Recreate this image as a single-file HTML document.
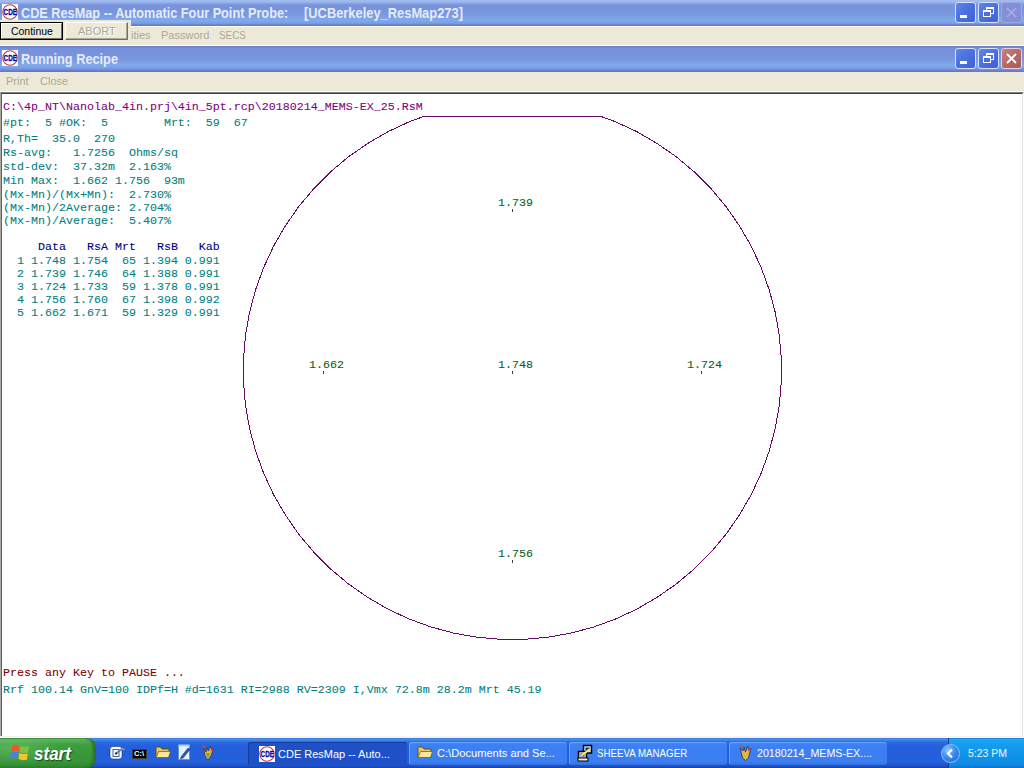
<!DOCTYPE html>
<html><head><meta charset="utf-8">
<style>
*{margin:0;padding:0;box-sizing:border-box}
html,body{width:1024px;height:768px;overflow:hidden;background:#fff;position:relative;font-family:"Liberation Sans",sans-serif}
.abs{position:absolute}
.tb{position:absolute;left:0;width:1024px;height:26px;
 background:linear-gradient(to bottom,#a4bef2 0px,#9cb8f0 2px,#88a4e4 3.5px,#7894da 5px,#7893dc 9px,#7a97df 14px,#7c9fe3 17px,#7eaae8 20px,#7aa6e8 22px,#7c92e0 24px,#6878c8 25px,#6878c8 26px)}
.ttl{position:absolute;left:21px;top:4px;color:#e4ecfc;font-weight:bold;font-size:14px;white-space:pre;transform:scaleX(0.908);transform-origin:0 0}
.menu{position:absolute;left:0;width:1024px;background:#ece9d8}
.mt{position:absolute;font-size:11px;color:#aca899;white-space:pre}
.mono{position:absolute;font-family:"Liberation Mono",monospace;font-size:11.67px;white-space:pre;line-height:14px;-webkit-text-stroke:0.08px currentColor}
.teal{color:#008080}.purp{color:#800080}.navy{color:#000080}.dred{color:#800000}.grn{color:#0b5d1e}
.tick{position:absolute;width:1px;height:3px;background:#2c4a30}
.xbtn{position:absolute;width:21px;height:21px;border:1px solid #d8e2fa;border-radius:3px;
 background:linear-gradient(135deg,#5f85ea 0%,#4a6fe0 50%,#3d62db 100%)}
.tbtn{position:absolute;top:742px;height:23px;border-radius:3px;color:#fff;font-size:11px;white-space:pre;line-height:23px}
</style></head><body>
<!-- main title bar -->
<div class="tb" style="top:0"></div>
<svg class="abs" style="left:2px;top:4px" width="16" height="16"><rect x="0" y="0" width="16" height="16" fill="#fff"/><circle cx="8" cy="8" r="7.2" fill="none" stroke="#c03a3a" stroke-width="1.1"/><text x="1.6" y="11.3" font-family="Liberation Sans" font-weight="bold" font-size="8.6" fill="#0a0aa8" stroke="#0a0aa8" stroke-width="0.3" textLength="13.4" lengthAdjust="spacingAndGlyphs">CDE</text></svg><div class="xbtn" style="left:955px;top:2px"><div class="abs" style="left:4px;top:12px;width:7px;height:3px;background:#fff"></div></div>
<div class="xbtn" style="left:978px;top:2px"><div class="abs" style="left:7px;top:4px;width:8px;height:7px;border:1px solid #fff;border-top-width:2px"></div><div class="abs" style="left:4px;top:7px;width:8px;height:7px;border:1px solid #fff;border-top-width:2px;background:#4a6fe0"></div></div><div class="xbtn" style="left:1001px;top:2px;background:#8490d6;border-color:#9aa8e6"><svg class="abs" style="left:0;top:0" width="19" height="19"><path d="M5 5 L14 14 M14 5 L5 14" stroke="#b4b0e4" stroke-width="1.2"/></svg></div>
<div class="ttl" style="top:5px">CDE ResMap -- Automatic Four Point Probe:</div><div class="ttl" style="top:5px;left:304px;transform:scaleX(0.92)">[UCBerkeley_ResMap273]</div>
<!-- main menu -->
<div class="menu" style="top:26px;height:20px;border-top:1px solid #fff;border-bottom:1px solid #fff"></div>
<div class="mt" style="left:131px;top:29px">ities</div>
<div class="mt" style="left:161px;top:29px">Password</div>
<div class="mt" style="left:219px;top:29px;transform:scaleX(0.9);transform-origin:0 0">SECS</div>
<!-- button panel -->
<div class="abs" style="left:0;top:20px;width:131px;height:25px;background:#ece9d8"></div>
<div class="abs" style="left:0;top:22px;width:63px;height:18px;border:1px solid #000;background:#ece9d8">
 <div class="abs" style="left:0;top:0;right:0;bottom:0;border-top:1px solid #fff;border-left:1px solid #fff;border-right:1px solid #716f64;border-bottom:1px solid #716f64"></div>
 <div class="abs" style="left:10px;top:2px;font-size:11px;color:#000;transform:scaleX(0.95);transform-origin:0 0">Continue</div>
</div>
<div class="abs" style="left:65px;top:22px;width:63px;height:18px;background:#ece9d8;border-top:1px solid #fff;border-left:1px solid #fff;border-right:1px solid #716f64;border-bottom:1px solid #716f64">
 <div class="abs" style="left:0;top:0;right:0;bottom:0;border-right:1px solid #aca899;border-bottom:1px solid #aca899"></div>
 <div class="abs" style="left:12px;top:2px;font-size:11px;color:#aca899;text-shadow:1px 1px 0 #fff">ABORT</div>
</div>
<!-- running recipe title -->
<div class="tb" style="top:46px;background:linear-gradient(to bottom,#6c80cc 0px,#6c80cc 1px,#7690dc 2px,#7893dc 8px,#7a97df 13px,#7c9fe3 16px,#7eaae8 19px,#7aa6e8 21px,#7c92e0 23px,#6878c8 25px,#6878c8 26px)"></div>
<svg class="abs" style="left:2px;top:50px" width="16" height="16"><rect x="0" y="0" width="16" height="16" fill="#fff"/><circle cx="8" cy="8" r="7.2" fill="none" stroke="#c03a3a" stroke-width="1.1"/><text x="1.6" y="11.3" font-family="Liberation Sans" font-weight="bold" font-size="8.6" fill="#0a0aa8" stroke="#0a0aa8" stroke-width="0.3" textLength="13.4" lengthAdjust="spacingAndGlyphs">CDE</text></svg><div class="xbtn" style="left:955px;top:48px"><div class="abs" style="left:4px;top:12px;width:7px;height:3px;background:#fff"></div></div>
<div class="xbtn" style="left:978px;top:48px"><div class="abs" style="left:7px;top:4px;width:8px;height:7px;border:1px solid #fff;border-top-width:2px"></div><div class="abs" style="left:4px;top:7px;width:8px;height:7px;border:1px solid #fff;border-top-width:2px;background:#4a6fe0"></div></div><div class="xbtn" style="left:1001px;top:48px;background:linear-gradient(135deg,#c88080 0%,#b86a64 50%,#a85a58 100%);border-color:#e8d0e0"><svg class="abs" style="left:0;top:0" width="19" height="19"><path d="M5 5 L14 14 M14 5 L5 14" stroke="#fff" stroke-width="1.8"/></svg></div>
<div class="ttl" style="top:51px;transform:scaleX(0.91)">Running Recipe</div>
<div class="menu" style="top:72px;height:20px;border-bottom:1px solid #fff"></div>
<div class="mt" style="left:6px;top:75px">Print</div>
<div class="mt" style="left:40px;top:75px">Close</div>
<!-- client area -->
<div class="abs" style="left:0;top:92px;width:1024px;height:646px;border-top:1px solid #808080;border-left:1px solid #a8a8a0;border-right:1px solid #fff;border-bottom:1px solid #fff;background:#fff">
 <div class="abs" style="left:0;top:0;right:0;bottom:0;border-top:1px solid #404040;border-left:1px solid #606060;border-right:1px solid #e6e4de;border-bottom:1px solid #e6e4de"></div>
</div>
<!-- text -->
<div class="mono purp" style="left:3px;top:100px">C:\4p_NT\Nanolab_4in.prj\4in_5pt.rcp\20180214_MEMS-EX_25.RsM</div>
<div class="mono teal" style="left:3px;top:116px">#pt:  5 #OK:  5        Mrt:  59  67</div>
<div class="mono teal" style="left:3px;top:132px">R,Th=  35.0  270</div>
<div class="mono teal" style="left:3px;top:146px">Rs-avg:   1.7256  Ohms/sq</div>
<div class="mono teal" style="left:3px;top:160px">std-dev:  37.32m  2.163%</div>
<div class="mono teal" style="left:3px;top:174px">Min Max:  1.662 1.756  93m</div>
<div class="mono teal" style="left:3px;top:188px">(Mx-Mn)/(Mx+Mn):  2.730%</div>
<div class="mono teal" style="left:3px;top:201px">(Mx-Mn)/2Average: 2.704%</div>
<div class="mono teal" style="left:3px;top:214px">(Mx-Mn)/Average:  5.407%</div>
<div class="mono navy" style="left:3px;top:240px">     Data   RsA Mrt   RsB   Kab</div>
<div class="mono teal" style="left:3px;top:255px;line-height:13px">  1 1.748 1.754  65 1.394 0.991
  2 1.739 1.746  64 1.388 0.991
  3 1.724 1.733  59 1.378 0.991
  4 1.756 1.760  67 1.398 0.992
  5 1.662 1.671  59 1.329 0.991</div>
<div class="mono dred" style="left:3px;top:666px">Press any Key to PAUSE ...</div>
<div class="mono teal" style="left:3px;top:683px">Rrf 100.14 GnV=100 IDPf=H #d=1631 RI=2988 RV=2309 I,Vmx 72.8m 28.2m Mrt 45.19</div>
<!-- wafer plot -->
<svg class="abs" style="left:0;top:0" width="1024" height="768">
<path d="M781.3 358.7 L779.3 335.3 L775.2 312.1 L769.1 289.4 L761.1 267.4 L751.2 246.1 L739.4 225.8 L726.0 206.5 L710.9 188.5 L694.3 171.9 L676.3 156.8 L657.0 143.4 L636.7 131.6 L615.4 121.7 L601.2 116.5 L423.6 116.5 L409.4 121.7 L388.1 131.6 L367.8 143.4 L348.5 156.8 L330.5 171.9 L313.9 188.5 L298.8 206.5 L285.4 225.8 L273.6 246.1 L263.7 267.4 L255.7 289.4 L249.6 312.1 L245.5 335.3 L243.5 358.7 L243.5 382.1 L245.5 405.5 L249.6 428.7 L255.7 451.4 L263.7 473.4 L273.6 494.7 L285.4 515.0 L298.8 534.3 L313.9 552.3 L330.5 568.9 L348.5 584.0 L367.8 597.4 L388.1 609.2 L409.4 619.1 L431.4 627.1 L454.1 633.2 L477.3 637.3 L500.7 639.3 L524.1 639.3 L547.5 637.3 L570.7 633.2 L593.4 627.1 L615.4 619.1 L636.7 609.2 L657.0 597.4 L676.3 584.0 L694.3 568.9 L710.9 552.3 L726.0 534.3 L739.4 515.0 L751.2 494.7 L761.1 473.4 L769.1 451.4 L775.2 428.7 L779.3 405.5 L781.3 382.1 Z" fill="none" stroke="#640a64" stroke-width="1" shape-rendering="crispEdges"/>
</svg>
<div class="mono grn" style="left:498px;top:196px">1.739</div><div class="tick" style="left:512px;top:209px"></div>
<div class="mono grn" style="left:309px;top:358px">1.662</div><div class="tick" style="left:323px;top:371px"></div>
<div class="mono grn" style="left:498px;top:358px">1.748</div><div class="tick" style="left:512px;top:371px"></div>
<div class="mono grn" style="left:687px;top:358px">1.724</div><div class="tick" style="left:701px;top:371px"></div>
<div class="mono grn" style="left:498px;top:547px">1.756</div><div class="tick" style="left:512px;top:560px"></div>
<!-- taskbar -->
<div class="abs" style="left:0;top:736px;width:1024px;height:2px;background:#f4f4f0"></div>
<div class="abs" style="left:0;top:738px;width:1024px;height:30px;background:linear-gradient(to bottom,#3168d5 0,#4a92ee 1px,#3d86ec 2px,#2a6ce2 4px,#245fdc 8px,#245edb 50%,#2461dc 80%,#1d4fc4 94%,#1941a5 100%)"></div>
<!-- quick launch -->
<svg class="abs" style="left:108px;top:744px" width="18" height="17"><rect x="2" y="2.5" width="12" height="12.5" rx="3" fill="#f4fafe" stroke="#1a3a90" stroke-width="0.6"/><rect x="5" y="5.5" width="6" height="7" fill="none" stroke="#4a6a8a" stroke-width="1"/><path d="M8 9.5 L14 5" stroke="#5a7ab0" stroke-width="1.6"/><path d="M14 5 L16.5 5.5" stroke="#c0a080" stroke-width="1.6"/><circle cx="8" cy="9.5" r="0.9" fill="#000"/></svg>
<div class="abs" style="left:132px;top:749px;width:15px;height:10px;background:#000;border:1px solid #404040"><div class="abs" style="left:1px;top:-1px;color:#fff;font-size:7.5px;font-weight:bold;line-height:10px">C:\</div></div>
<svg class="abs" style="left:155px;top:745px" width="16" height="14"><path d="M1 2.5 L1 12.5 L14 12.5 L14 4 L7 4 L5.5 2 L1.5 2 Z" fill="#e8c860" stroke="#5a4a10" stroke-width="0.9"/><path d="M1.2 12.5 L3.5 6.5 L15.5 6.5 L13.5 12.5 Z" fill="#fbe79a" stroke="#7a6418" stroke-width="0.8"/></svg>
<svg class="abs" style="left:178px;top:744px" width="13" height="16"><rect x="0.5" y="1.5" width="11" height="14" fill="#e6f2fe" stroke="#6a90c8" stroke-width="1"/><rect x="0.5" y="0.5" width="11" height="2" fill="#b8d0f0"/><path d="M3 13 L10 4 L12 5.5 L5 14 L2.5 14.5 Z" fill="#2a5cc8" stroke="#0c2c7a" stroke-width="0.6"/></svg>
<svg class="abs" style="left:201px;top:744px" width="14" height="17"><path d="M2.5 3 L4 12 L7 16 L10 12 L12.5 4 L10.5 6 L9 2 L7.5 7 L6 4 L5 8 Z" fill="#e8b040" stroke="#3a3060" stroke-width="0.8"/><path d="M5 9 L9 9 L8 13 L6 13 Z" fill="#70b040"/><circle cx="3" cy="2.5" r="1.6" fill="#d04040"/><circle cx="11" cy="6" r="1.3" fill="#d04040"/></svg>
<!-- task buttons -->
<div class="tbtn" style="left:248px;width:159px;background:#1e50c8;box-shadow:inset 1px 1px 0 #183c98"></div>
<svg class="abs" style="left:259px;top:746px" width="16" height="16"><rect x="0" y="0" width="16" height="16" fill="#fff"/><circle cx="8" cy="8" r="7.2" fill="none" stroke="#c03a3a" stroke-width="1.1"/><text x="1.6" y="11.3" font-family="Liberation Sans" font-weight="bold" font-size="8.6" fill="#0a0aa8" stroke="#0a0aa8" stroke-width="0.3" textLength="13.4" lengthAdjust="spacingAndGlyphs">CDE</text></svg>
<div class="tbtn" style="left:409px;width:158px;background:linear-gradient(to bottom,#4a8cf6 0,#3c80f3 3px,#3b7ef2 85%,#3470e0 100%);box-shadow:inset 1px 1px 0 #66a2fa"></div>
<svg class="abs" style="left:417px;top:745px" width="16" height="14"><path d="M1 2.5 L1 12.5 L14 12.5 L14 4 L7 4 L5.5 2 L1.5 2 Z" fill="#e8c860" stroke="#5a4a10" stroke-width="0.9"/><path d="M1.2 12.5 L3.5 6.5 L15.5 6.5 L13.5 12.5 Z" fill="#fbe79a" stroke="#7a6418" stroke-width="0.8"/></svg>
<div class="tbtn" style="left:569px;width:158px;background:linear-gradient(to bottom,#4a8cf6 0,#3c80f3 3px,#3b7ef2 85%,#3470e0 100%);box-shadow:inset 1px 1px 0 #66a2fa"></div>
<svg class="abs" style="left:577px;top:744px" width="18" height="18"><rect x="6.5" y="1.5" width="8" height="7.5" fill="#e0e0f0" stroke="#000" stroke-width="1.5"/><rect x="8.5" y="3.5" width="4" height="3" fill="#203080"/><rect x="1.5" y="7.5" width="8" height="7" fill="#e0e0f0" stroke="#000" stroke-width="1.5"/><rect x="3.5" y="9.5" width="4" height="3" fill="#203080"/><rect x="1" y="14" width="10" height="3" fill="#f0f0f0" stroke="#000" stroke-width="1"/><path d="M4 12 L13 5" stroke="#f8f040" stroke-width="2.2"/></svg>
<div class="tbtn" style="left:729px;width:158px;background:linear-gradient(to bottom,#4a8cf6 0,#3c80f3 3px,#3b7ef2 85%,#3470e0 100%);box-shadow:inset 1px 1px 0 #66a2fa"></div>
<svg class="abs" style="left:739px;top:744px" width="13" height="17"><path d="M1 4 L3.5 14 L6.5 16.5 L9.5 14 L12 4 L10 6.5 L8.5 2 L6.5 8 L5 3 L4 7 Z" fill="#e8b048" stroke="#203070" stroke-width="0.8"/><path d="M4 10 L9 10 L8 14 L5 14 Z" fill="#c8c040"/><circle cx="2" cy="2.5" r="1.6" fill="#d04848"/><circle cx="11" cy="5.5" r="1.3" fill="#c84040"/></svg>
<div class="abs" style="left:278px;top:748px;color:#fff;font-size:11px;white-space:pre;transform:scaleX(1.0);transform-origin:0 0">CDE ResMap -- Auto...</div>
<div class="abs" style="left:437px;top:747px;color:#fff;font-size:11px;white-space:pre;transform:scaleX(1.01);transform-origin:0 0">C:\Documents and Se...</div>
<div class="abs" style="left:597px;top:747px;color:#fff;font-size:11px;white-space:pre;transform:scaleX(0.885);transform-origin:0 0">SHEEVA MANAGER</div>
<div class="abs" style="left:757px;top:747px;color:#fff;font-size:11px;white-space:pre;transform:scaleX(0.97);transform-origin:0 0">20180214_MEMS-EX....</div>
<!-- tray -->
<div class="abs" style="left:948px;top:738px;width:76px;height:30px;border-left:1px solid #0b3a9a;background:linear-gradient(to bottom,#1a64c8 0,#26aaf5 1px,#18a2f2 3px,#129ced 8px,#1093ea 60%,#0f8ae4 88%,#0c72cc 100%)"></div>
<div class="abs" style="left:941px;top:744px;width:19px;height:19px;border-radius:50%;border:1px solid #8cc4f8;background:radial-gradient(circle at 35% 30%,#8cc8fa 0,#3a8cf0 45%,#1a5cd8 100%)"><svg class="abs" style="left:0;top:0" width="17" height="17"><path d="M10 4.5 L6 8.5 L10 12.5" fill="none" stroke="#fff" stroke-width="2.2"/></svg></div>
<div class="abs" style="left:968px;top:747px;color:#eef6ff;font-size:11px;white-space:pre;transform:scaleX(0.95);transform-origin:0 0">5:23 PM</div>
<!-- start -->
<div class="abs" style="left:0;top:738px;width:96px;height:30px;border-radius:0 9px 9px 0;background:linear-gradient(to bottom,#3f8f3f 0,#6cc06c 1px,#52ae52 3px,#3e9e3e 7px,#3a983a 50%,#379437 80%,#2f862f 100%);box-shadow:inset -3px 0 3px #2a702a"></div>
<div class="abs" style="left:0;top:740px;width:60px;height:26px;background:radial-gradient(ellipse at 20% 30%,rgba(140,220,140,0.35) 0,rgba(140,220,140,0) 70%)"></div>
<svg class="abs" style="left:10px;top:743px" width="20" height="18"><path d="M2 2.5 Q5 1 9.5 2.5 L8.5 8.5 Q5 7 1 8.5 Z" fill="#ec5a2a"/><path d="M10.5 3 Q14 4.5 19 3 L18 9.5 Q14 11 9.5 9 Z" fill="#7cc440"/><path d="M1 9.5 Q5 8 8.3 9.5 L7.5 15.5 Q4 14 0 15.5 Z" fill="#4a82e8"/><path d="M9.3 10 Q13 11.8 17.8 10.5 L17 16.5 Q13 18 8.5 16 Z" fill="#f8c428"/></svg>
<div class="abs" style="left:34px;top:743px;color:#fff;font-size:18.5px;font-weight:bold;font-style:italic;white-space:pre;text-shadow:1px 1px 1px #1a4a1a;transform:scaleX(0.92);transform-origin:0 0">start</div>
</body></html>
